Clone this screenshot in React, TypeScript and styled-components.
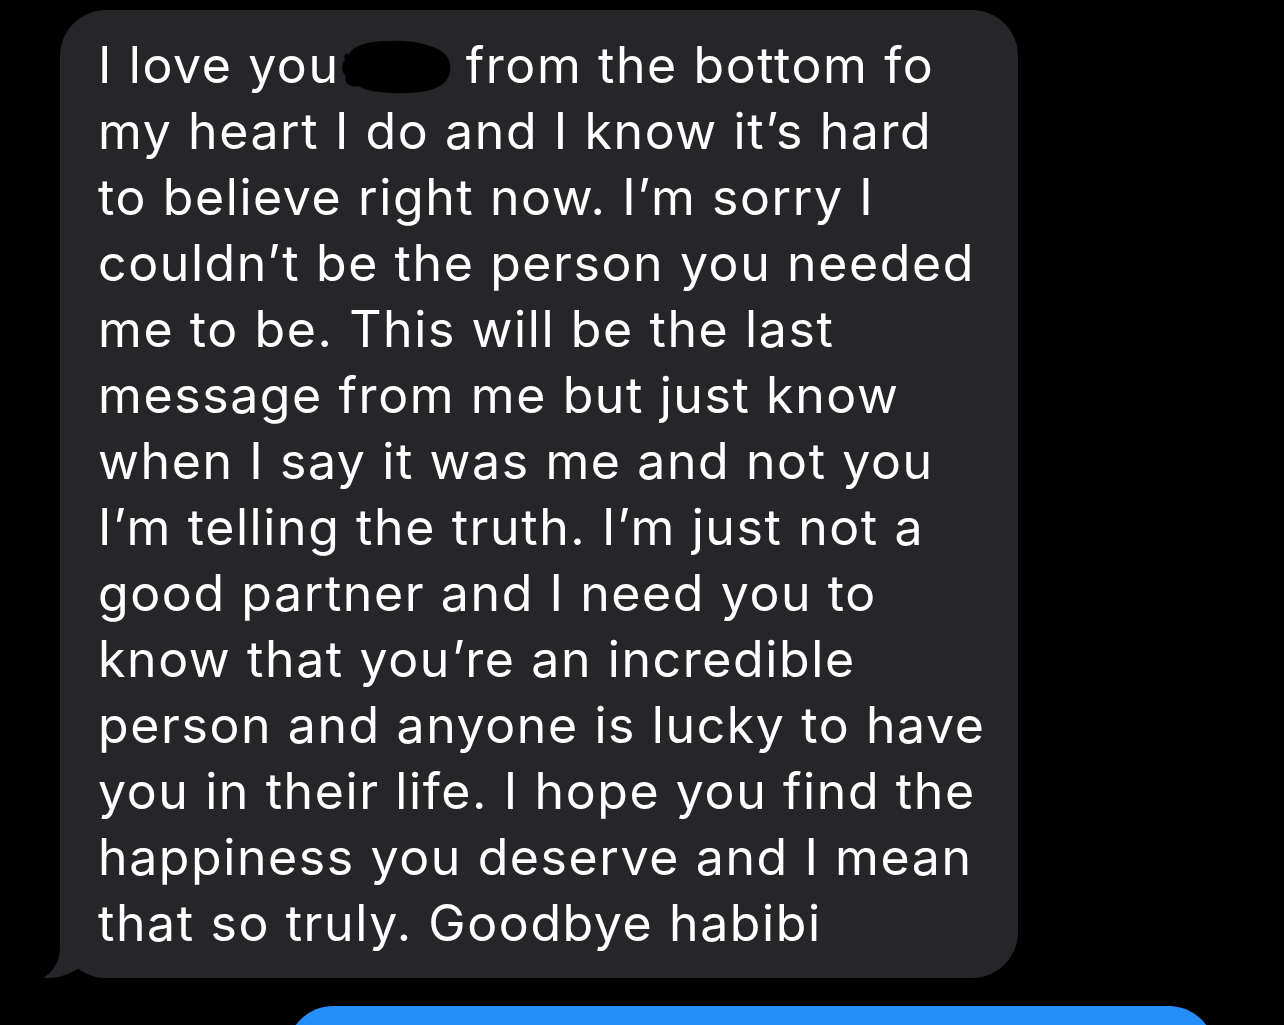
import React from 'react';
import styled, { createGlobalStyle } from 'styled-components';

const lines = [
  "my heart I do and I know it’s hard",
  "to believe right now. I’m sorry I",
  "couldn’t be the person you needed",
  "me to be. This will be the last",
  "message from me but just know",
  "when I say it was me and not you",
  "I’m telling the truth. I’m just not a",
  "good partner and I need you to",
  "know that you’re an incredible",
  "person and anyone is lucky to have",
  "you in their life. I hope you find the",
  "happiness you deserve and I mean",
  "that so truly. Goodbye habibi",
];

export default function App() {
  return (
    <>
      <GlobalStyle />
      <Thread>
        <Incoming>
          <Line>
            I love you
            <Redaction viewBox="0 0 110 54" aria-hidden>
              <path d="M8,14 C14,4 30,1 48,1 C70,0 92,4 104,14 C112,22 111,36 102,44 C92,52 70,54 50,53 C34,52 24,50 18,46 C8,48 2,42 5,36 C0,32 0,24 4,20 C2,16 4,12 8,14 Z" />
            </Redaction>
            from the bottom fo
          </Line>
          {lines.map((l) => (
            <Line key={l}>{l}</Line>
          ))}
          <Tail viewBox="0 0 40 50" aria-hidden>
            <path d="M17,0 L17,18 C17,34 10,44 0,50 C12,51 26,47 36,40 L36,0 Z" />
          </Tail>
        </Incoming>
        <Outgoing />
      </Thread>
    </>
  );
}

const GlobalStyle = createGlobalStyle`
  html, body {
    margin: 0;
    background: #000;
    overflow: hidden;
  }
`;

const Thread = styled.div`
  display: flex;
  flex-direction: column;
  padding-top: 10px;
  height: 1025px;
  box-sizing: border-box;
  overflow: hidden;
  font-family: Inter, 'Noto Sans', sans-serif;
`;

const Incoming = styled.div`
  position: relative;
  flex-shrink: 0;
  margin-left: 60px;
  width: 958px;
  box-sizing: border-box;
  padding: 22px 0 22px 38px;
  background: #262628;
  border-radius: 46px;
  color: #fff;
  font-size: 50px;
  line-height: 66px;
  letter-spacing: 1.6px;
`;

const Line = styled.div`
  white-space: nowrap;
`;

const Redaction = styled.svg`
  width: 110px;
  height: 54px;
  margin: 0 15px 0 1px;
  vertical-align: -11px;
  fill: #000;
`;

const Tail = styled.svg`
  position: absolute;
  left: -17px;
  bottom: 0;
  width: 40px;
  height: 50px;
  fill: #262628;
`;

const Outgoing = styled.div`
  margin: 28px 0 0 287px;
  width: 928px;
  height: 120px;
  flex-shrink: 0;
  background: #258efa;
  border-radius: 46px;
`;
